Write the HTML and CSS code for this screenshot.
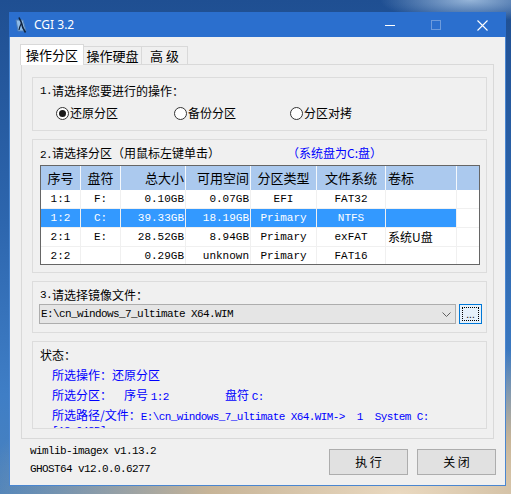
FILE: index.html
```html
<!DOCTYPE html>
<html lang="zh-CN">
<head>
<meta charset="utf-8">
<title>CGI 3.2</title>
<link rel="stylesheet" href="styles.css">
</head>
<body>
<div class="window">
  <div class="titlebar">
    <svg class="app-icon" width="13" height="16" viewBox="0 0 13 16">
      <path d="M1 3 L8 3 L11 14 L3 14 Z" fill="#8fbce8" stroke="#4f7fb8" stroke-width="1"/>
      <path d="M4 0.5 C5 3 6 4 6.5 6 C7 9 8 12 10.5 15.5" fill="none" stroke="#10243f" stroke-width="1.6"/>
      <path d="M6.5 6 C5.5 8 4.5 10 4 13" fill="none" stroke="#10243f" stroke-width="1.2"/>
    </svg>
    <span class="title">CGI 3.2</span>
    <div class="caption">
      <span class="cbtn"><svg width="10" height="10" viewBox="0 0 10 10"><line x1="0" y1="5.5" x2="10" y2="5.5" stroke="#fff" stroke-width="1"/></svg></span>
      <span class="cbtn"><svg width="10" height="10" viewBox="0 0 10 10"><rect x="0.5" y="0.5" width="9" height="9" fill="none" stroke="#6d9bdc" stroke-width="1"/></svg></span>
      <span class="cbtn"><svg width="11" height="11" viewBox="0 0 11 11"><path d="M0.5 0.5 L10.5 10.5 M10.5 0.5 L0.5 10.5" stroke="#fff" stroke-width="1.1"/></svg></span>
    </div>
  </div>
  <div class="client">
    <div class="tabs">
      <div class="tab active">操作分区</div>
      <div class="tab t2">操作硬盘</div>
      <div class="tab t3">高 级</div>
    </div>
    <div class="panel">
      <div class="group g1">
        <div class="glabel"><span class="mono">1.</span>请选择您要进行的操作：</div>
        <div class="radios">
          <div class="radio r1"><span class="rb checked"></span>还原分区</div>
          <div class="radio r2"><span class="rb"></span>备份分区</div>
          <div class="radio"><span class="rb"></span>分区对拷</div>
        </div>
      </div>
      <div class="group g2">
        <div class="glabel"><span class="lab2"><span class="mono">2.</span>请选择分区（用鼠标左键单击）</span><span class="blue">（系统盘为C:盘）</span></div>
        <div class="table">
          <div class="tr th"><span class="c">序号</span><span class="c">盘符</span><span class="r">总大小</span><span class="r">可用空间</span><span class="c">分区类型</span><span class="c">文件系统</span><span class="l">卷标</span><span></span></div>
          <div class="tr"><span class="c">1:1</span><span class="c">F:</span><span class="r">0.10GB</span><span class="r">0.07GB</span><span class="c">EFI</span><span class="c">FAT32</span><span class="l"></span><span></span></div>
          <div class="tr sel"><span class="c">1:2</span><span class="c">C:</span><span class="r">39.33GB</span><span class="r">18.19GB</span><span class="c">Primary</span><span class="c">NTFS</span><span class="l"></span><span></span></div>
          <div class="tr"><span class="c">2:1</span><span class="c">E:</span><span class="r">28.52GB</span><span class="r">8.94GB</span><span class="c">Primary</span><span class="c">exFAT</span><span class="l cjk">系统U盘</span><span></span></div>
          <div class="tr"><span class="c">2:2</span><span class="c"></span><span class="r">0.29GB</span><span class="r">unknown</span><span class="c">Primary</span><span class="c">FAT16</span><span class="l"></span><span></span></div>
        </div>
      </div>
      <div class="group g3">
        <div class="glabel"><span class="mono">3.</span>请选择镜像文件：</div>
        <div class="combo-row">
          <div class="combo">
            <span class="mono">E:\cn_windows_7_ultimate X64.WIM</span>
            <svg class="chev" width="9" height="5" viewBox="0 0 9 5"><path d="M0.5 0.5 L4.5 4.5 L8.5 0.5" fill="none" stroke="#606060" stroke-width="1"/></svg>
          </div>
          <div class="browse"><span class="focus">...</span></div>
        </div>
      </div>
      <div class="group g4">
        <div class="sline">状态：</div>
        <div class="sline blue ind">所选操作：还原分区</div>
        <div class="sline blue ind"><span class="s1">所选分区：</span><span class="s2">序号 <span class="mono">1:2</span></span><span>盘符 <span class="mono">C:</span></span></div>
        <div class="spath blue ind">所选路径/文件：<span class="mono">E:\cn_windows_7_ultimate X64.WIM-&gt;&nbsp;&nbsp;1&nbsp;&nbsp;System C:</span><br><span class="mono">[13.04GB]</span></div>
      </div>
    </div>
    <div class="footer">
      <div class="info">
        <div class="mono">wimlib-imagex v1.13.2</div>
        <div class="mono">GHOST64 v12.0.0.6277</div>
      </div>
      <div class="buttons">
        <div class="btn">执 行</div>
        <div class="btn">关 闭</div>
      </div>
    </div>
  </div>
</div>
</body>
</html>
```

FILE: styles.css
```css
html, body {
  margin: 0;
  padding: 0;
}
body {
  width: 511px;
  height: 494px;
  overflow: hidden;
  box-sizing: border-box;
  padding: 12px 0 0 9px;
  font-family: "Noto Sans CJK SC", sans-serif;
  font-size: 12px;
  color: #000;
  background:
    radial-gradient(ellipse 90px 22px at 92% 0%, rgba(190, 215, 240, 0.75), rgba(190, 215, 240, 0)),
    radial-gradient(ellipse 420px 150px at 78% 100%, #ead9c0 0%, #c7b497 45%, rgba(140, 140, 150, 0) 100%),
    linear-gradient(180deg, #1f4f92 0%, #2d66ae 45%, #3f7ec6 80%, #4a82bd 100%);
}
.window {
  width: 497px;
  height: 474px;
  box-sizing: border-box;
  border: 1px solid #4a86d0;
  border-top: none;
  background: #f0f0f0;
  display: flex;
  flex-direction: column;
}
.titlebar {
  height: 25px;
  background: #2b6fce;
  display: flex;
  align-items: center;
  margin: 0 -1px;
}
.app-icon {
  margin-left: 6px;
  margin-top: 1px;
}
.title {
  margin-left: 6px;
  font-family: "Noto Sans", sans-serif;
  font-size: 12px;
  color: #fff;
  line-height: 25px;
}
.caption {
  margin-left: auto;
  display: flex;
  margin-right: 1px;
}
.cbtn {
  width: 46px;
  height: 25px;
  display: flex;
  align-items: center;
  justify-content: center;
  padding-top: 1px;
  box-sizing: border-box;
}
.client {
  flex: 1;
  display: flex;
  flex-direction: column;
}
.tabs {
  display: flex;
  align-items: flex-end;
  height: 20px;
  margin: 7px 0 0 10px;
}
.tab {
  box-sizing: border-box;
  height: 18px;
  border: 1px solid #d9d9d9;
  border-bottom: none;
  background: #f0f0f0;
  font-size: 13px;
  line-height: 18px;
  text-align: center;
  margin-left: -1px;
}
.tab.active {
  position: relative;
  z-index: 1;
  height: 21px;
  margin-bottom: -1px;
  width: 64px;
  margin-left: 0;
  background: #fff;
  line-height: 20px;
}
.tab.t2 { width: 59px; }
.tab.t3 { width: 47px; }
.panel {
  margin-left: 11px;
  width: 473px;
  height: 375px;
  box-sizing: border-box;
  border: 1px solid #d9d9d9;
  padding: 12px 0 0 10px;
  display: flex;
  flex-direction: column;
  gap: 8px;
}
.group {
  width: 455px;
  box-sizing: border-box;
  border: 1px solid #dcdcdc;
  flex: none;
}
.g1 { height: 54px; padding: 5px 0 0 7px; }
.g2 { height: 134px; padding: 5px 0 0 7px; }
.g3 { height: 52px; padding: 5px 0 0 6px; }
.g4 { height: 88px; padding: 3px 0 0 7px; overflow: hidden; }
.glabel {
  line-height: 16px;
  height: 16px;
  white-space: nowrap;
  display: flex;
}
.g3 .glabel { padding-left: 1px; }
.mono {
  font-family: "Liberation Mono", monospace;
  font-size: 11px;
  letter-spacing: -0.6px;
}
.blue { color: #0000ff; }
.lab2 { width: 247px; flex: none; }
.radios {
  display: flex;
  margin: 6px 0 0 16px;
  line-height: 16px;
}
.radio {
  display: flex;
  align-items: center;
  gap: 1px;
}
.radio.r1 { width: 118px; }
.radio.r2 { width: 116px; }
.rb {
  width: 13px;
  height: 13px;
  box-sizing: border-box;
  border: 1px solid #333;
  border-radius: 50%;
  background: #fff;
  display: flex;
  align-items: center;
  justify-content: center;
}
.rb.checked::after {
  content: "";
  width: 7px;
  height: 7px;
  border-radius: 50%;
  background: #1a1a1a;
}
.table {
  margin-top: 4px;
  width: 440px;
  height: 100px;
  box-sizing: border-box;
  border: 1px solid #666;
  background: #fff;
  overflow: hidden;
}
.tr {
  display: grid;
  grid-template-columns: 40px 40px 65px 65px 66px 69px 71px 22px;
  height: 19px;
}
.tr > span {
  box-sizing: border-box;
  border-right: 1px solid #f0f0f0;
  border-bottom: 1px solid #f0f0f0;
  line-height: 18px;
  white-space: nowrap;
  overflow: hidden;
  font-family: "Liberation Mono", monospace;
  font-size: 11px;
}
.tr > span:last-child { border-right: none; }
.tr > span.cjk {
  font-family: "Noto Sans CJK SC", sans-serif;
  font-size: 12px;
}
.tr .c { text-align: center; }
.tr .r { text-align: right; padding-right: 1px; }
.tr .l { text-align: left; padding-left: 2px; }
.th { height: 24px; background: #abc9ee; }
.th > span {
  font-family: "Noto Sans CJK SC", sans-serif;
  font-size: 13px;
  line-height: 24px;
  border-bottom: none;
  border-right-color: #f4f8fc;
}
.sel > span:not(:last-child) {
  background: #3399ff;
  color: #fff;
}
.combo-row {
  display: flex;
  gap: 3px;
  margin-top: 1px;
}
.combo {
  width: 417px;
  height: 20px;
  box-sizing: border-box;
  border: 1px solid #adadad;
  background: #e5e5e5;
  display: flex;
  align-items: center;
  padding-left: 1px;
}
.chev { margin-left: auto; margin-right: 4px; }
.browse {
  width: 23px;
  height: 20px;
  box-sizing: border-box;
  border: 1px solid #0078d7;
  background: #e5f1fb;
  padding: 2px;
}
.browse .focus {
  display: block;
  height: 100%;
  box-sizing: border-box;
  border: 1px dotted #000;
  font-size: 10px;
  line-height: 14px;
  text-align: center;
  font-family: "Liberation Sans", sans-serif;
}
.sline {
  line-height: 20px;
  height: 20px;
  white-space: nowrap;
}
.ind { padding-left: 12px; }
.s1 { display: inline-block; width: 72px; }
.s2 { display: inline-block; width: 101px; }
.spath {
  line-height: 12px;
  padding-top: 4px;
  white-space: nowrap;
}
.footer {
  display: flex;
  justify-content: space-between;
  padding: 0 9px 0 20px;
}
.info {
  padding-top: 3px;
  line-height: 18px;
}
.buttons {
  display: flex;
  gap: 9px;
  margin-top: 10px;
}
.btn {
  width: 79px;
  height: 26px;
  box-sizing: border-box;
  border: 1px solid #adadad;
  background: #e1e1e1;
  text-align: center;
  line-height: 24px;
  font-size: 12px;
}
```
